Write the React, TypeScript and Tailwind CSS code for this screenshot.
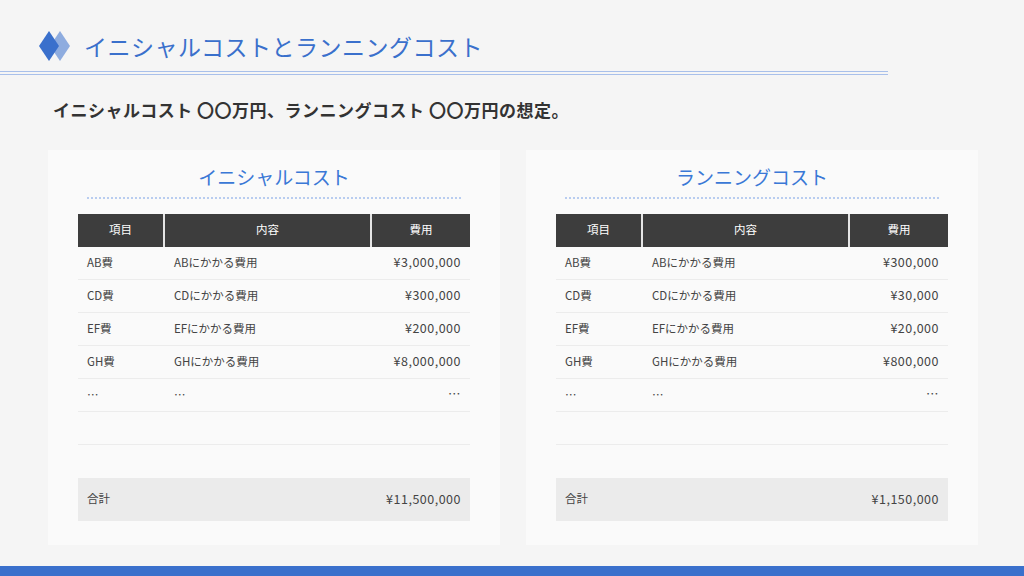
const F = { fontFamily: '"Noto Sans CJK JP","Noto Sans",sans-serif' };

type Row = [string, string, string];
function Panel({ title, rows, total }: { title: string; rows: Row[]; total: string }) {
  return (
    <div className="w-[452px] h-[395px] bg-[#fafafa] flex flex-col items-center pt-[14px]">
      <div className="text-[19px] leading-[26px] text-[#3a78d6]">{title}</div>
      <div className="w-[374px] mt-[7px] border-t-2 border-dotted border-[#b9cdf0]"></div>
      <div className="w-[392px] mt-[15px] text-[11.5px] text-[#444]">
        <div className="flex h-[33px] bg-[#3d3d3d] text-white">
          <div className="w-[87px] flex items-center justify-center border-r-2 border-[#e5e5e5]">項目</div>
          <div className="w-[207px] flex items-center justify-center border-r-2 border-[#e5e5e5]">内容</div>
          <div className="flex-1 flex items-center justify-center">費用</div>
        </div>
        {rows.map((r, i) => (
          <div key={i} className="flex h-[33px] items-center border-b border-[#ececec]">
            <div className="w-[87px] pl-[9px]">{r[0]}</div>
            <div className="w-[207px] pl-[9px]">{r[1]}</div>
            <div className="flex-1 text-right pr-[9px] text-[12.5px] tracking-[0.5px]">{r[2]}</div>
          </div>
        ))}
        <div className="h-[33px] border-b border-[#ececec]"></div>
        <div className="flex h-[43px] mt-[33px] items-center bg-[#ebebeb] px-[9px]">
          <div className="flex-1">合計</div>
          <div className="text-[12.5px] tracking-[0.5px]">{total}</div>
        </div>
      </div>
    </div>
  );
}

export default function App() {
  const a: Row[] = [
    ["AB費", "ABにかかる費用", "¥3,000,000"],
    ["CD費", "CDにかかる費用", "¥300,000"],
    ["EF費", "EFにかかる費用", "¥200,000"],
    ["GH費", "GHにかかる費用", "¥8,000,000"],
    ["…", "…", "…"],
  ];
  const b: Row[] = [
    ["AB費", "ABにかかる費用", "¥300,000"],
    ["CD費", "CDにかかる費用", "¥30,000"],
    ["EF費", "EFにかかる費用", "¥20,000"],
    ["GH費", "GHにかかる費用", "¥800,000"],
    ["…", "…", "…"],
  ];
  return (
    <div style={F} className="w-[1024px] h-[576px] bg-[#f5f5f5] flex flex-col relative overflow-hidden">
      <div className="flex items-center h-[70px] pl-[39px] pt-[22px]">
        <svg width="32" height="34" viewBox="0 0 32 34">
          <polygon points="21,2 31,17 21,32 11,17" fill="#8eacdf" />
          <polygon points="10,2 20,17 10,32 0,17" fill="#3a70cc" />
        </svg>
        <div className="ml-[13px] text-[23px] text-[#3a70cc] tracking-[0.5px]">イニシャルコストとランニングコスト</div>
      </div>
      <div className="w-[888px] h-[4px] border-t border-b border-[#a9c0ea] mt-[1px]"></div>
      <div className="pl-[53px] mt-[22px] text-[17px] font-semibold text-[#333] tracking-[0.5px]">イニシャルコスト 〇〇万円、ランニングコスト 〇〇万円の想定。</div>
      <div className="flex gap-[26px] pl-[48px] mt-[27px]">
        <Panel title="イニシャルコスト" rows={a} total="¥11,500,000" />
        <Panel title="ランニングコスト" rows={b} total="¥1,150,000" />
      </div>
      <div className="absolute bottom-0 left-0 w-full h-[10px] bg-[#3a70cc]"></div>
    </div>
  );
}
